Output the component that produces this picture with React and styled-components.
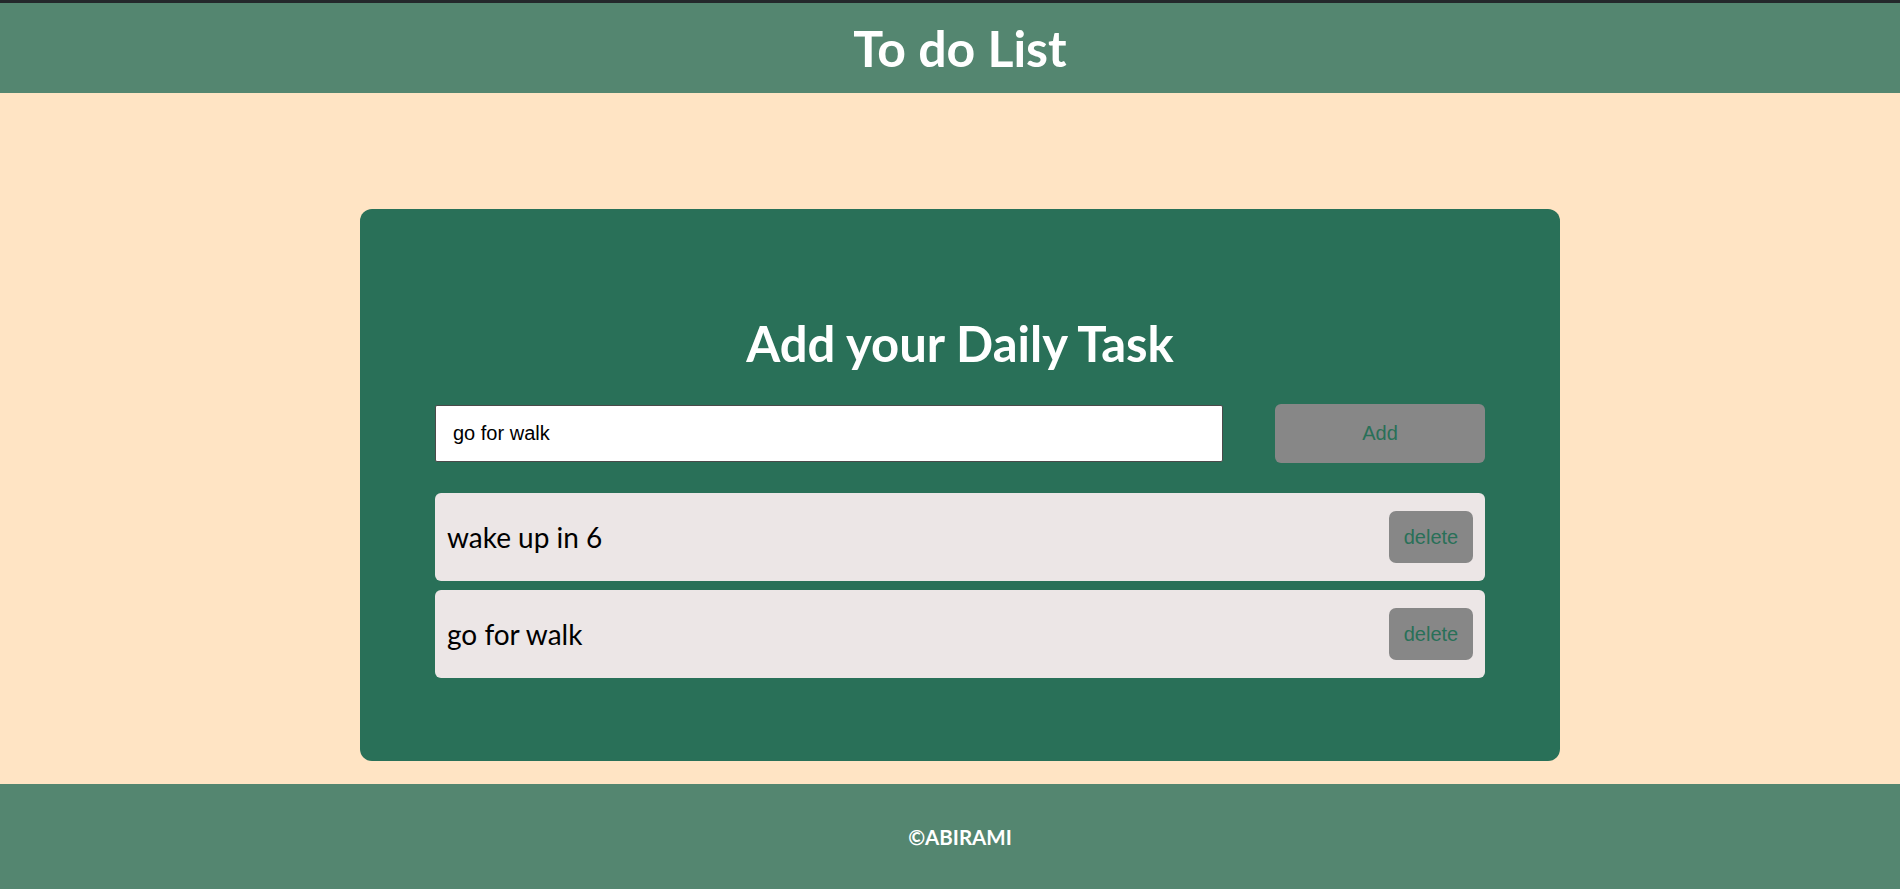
import React, { useState } from 'react'
import styled, { createGlobalStyle } from 'styled-components'

const GlobalStyle = createGlobalStyle`
  * { box-sizing: border-box; }
  html, body {
    margin: 0;
    padding: 0;
    background-color: bisque;
    font-family: "Trebuchet MS", Lato, "Open Sans", sans-serif;
  }
`

function App() {
  const [task, setTask] = useState('go for walk')
  const [tasks, setTasks] = useState(['wake up in 6', 'go for walk'])

  const addTask = () => {
    if (!task.trim()) return
    setTasks([...tasks, task])
  }

  const deleteTask = (index) => {
    setTasks(tasks.filter((_, i) => i !== index))
  }

  return (
    <Page>
      <GlobalStyle />
      <Header>
        <HeaderTitle>To do List</HeaderTitle>
      </Header>

      <Main>
        <Card>
          <CardTitle>Add your Daily Task</CardTitle>
          <InputRow>
            <TaskInput
              type="text"
              value={task}
              onChange={(e) => setTask(e.target.value)}
            />
            <AddButton onClick={addTask}>Add</AddButton>
          </InputRow>

          <TaskList>
            {tasks.map((t, i) => (
              <TaskItem key={i}>
                <TaskText>{t}</TaskText>
                <DeleteButton onClick={() => deleteTask(i)}>delete</DeleteButton>
              </TaskItem>
            ))}
          </TaskList>
        </Card>
      </Main>

      <Footer>
        <FooterText>©ABIRAMI</FooterText>
      </Footer>
    </Page>
  )
}

const Page = styled.div`
  min-height: 100vh;
  display: flex;
  flex-direction: column;
  background-color: #ffe4c4;
`

const Header = styled.header`
  height: 93px;
  border-top: 3px solid #24282b;
  background-color: #548670;
  display: flex;
  align-items: center;
  justify-content: center;
  padding-left: 20px;
`

const HeaderTitle = styled.h1`
  margin: 0;
  color: #fff;
  font-size: 50px;
  font-weight: 700;
  line-height: 1;
`

const Main = styled.main`
  flex: 1;
  padding: 116px 0 23px 20px;
  display: flex;
  justify-content: center;
`

const Card = styled.section`
  width: 1200px;
  padding: 106px 75px 83px;
  background-color: #297058;
  border-radius: 12px;
`

const CardTitle = styled.h2`
  margin: 0;
  text-align: center;
  color: #fff;
  font-size: 49px;
  font-weight: 700;
  line-height: 56px;
`

const InputRow = styled.div`
  margin-top: 33px;
  display: flex;
  align-items: center;
  justify-content: space-between;
`

const TaskInput = styled.input`
  width: 788px;
  height: 57px;
  padding: 0 17px;
  border: 1px solid #4a4a4a;
  border-radius: 2px;
  background: #fff;
  color: #000;
  font-family: "Liberation Sans", Arial, sans-serif;
  font-size: 20px;
  outline: none;
`

const AddButton = styled.button`
  width: 210px;
  height: 59px;
  border: none;
  border-radius: 6px;
  background-color: #878787;
  color: #297058;
  font-family: "Liberation Sans", Arial, sans-serif;
  font-size: 20px;
  cursor: pointer;
`

const TaskList = styled.ul`
  list-style: none;
  margin: 30px 0 0;
  padding: 0;
  display: flex;
  flex-direction: column;
  gap: 9px;
`

const TaskItem = styled.li`
  height: 88px;
  padding: 0 12px;
  display: flex;
  align-items: center;
  justify-content: space-between;
  background-color: #ece6e6;
  border-radius: 6px;
`

const TaskText = styled.span`
  color: #000;
  font-size: 28px;
`

const DeleteButton = styled.button`
  width: 84px;
  height: 52px;
  border: none;
  border-radius: 7px;
  background-color: #878787;
  color: #297058;
  font-family: "Liberation Sans", Arial, sans-serif;
  font-size: 20px;
  cursor: pointer;
`

const Footer = styled.footer`
  height: 105px;
  background-color: #548670;
  display: flex;
  align-items: center;
  justify-content: center;
  padding-left: 20px;
`

const FooterText = styled.p`
  margin: 0;
  color: #fff;
  font-size: 20.5px;
  font-weight: 700;
`

export default App
